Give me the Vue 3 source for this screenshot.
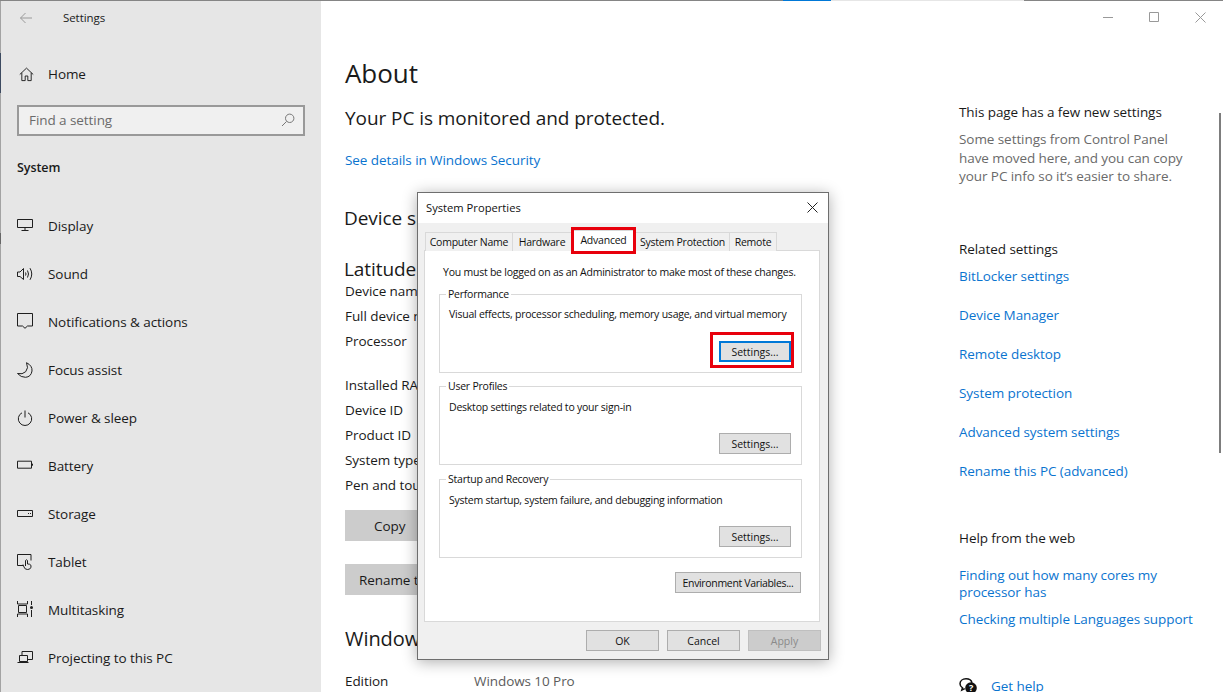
<template>
  <div class="page">
    <div class="topline">
      <span class="seg-blue"></span>
      <span class="seg-light"></span>
    </div>
    <div class="window">
      <aside class="side">
        <div class="edge"></div>
        <div class="side-head">
          <svg class="back" width="14" height="12" viewBox="0 0 14 12"><path d="M13 6H1.500M6.500 1 1.500 6l5 5" /></svg>
          <span>Settings</span>
        </div>
        <div class="home">
          <svg width="15" height="15" viewBox="0 0 16 16"><path d="M.8 8 8 1.200 15.200 8M3 6.200v8.300h3.600V9.600h2.800v4.900H13V6.200" /></svg>
          <span>Home</span>
        </div>
        <div class="search">
          <span>Find a setting</span>
          <svg width="14" height="14" viewBox="0 0 14 14"><circle cx="8.700" cy="5.300" r="4.200" /><path d="M5.600 8.400 1 13" /></svg>
        </div>
        <div class="side-title">System</div>
        <nav class="side-list">
          <div class="side-item">
            <svg width="16" height="16" viewBox="0 0 16 16"><path d="M.5 1.500h15v8H.5zM8 9.500v2.500M4.500 12.500h7" /></svg>
            <span>Display</span>
          </div>
          <div class="side-item">
            <svg width="16" height="16" viewBox="0 0 16 16"><path d="M.5 6v4.500h2.500l3.500 3V2.500L3 6zM8.500 6.500q1 1.500 0 3M10.500 4.500q2 3.500 0 7M13 2.200q3.500 5.800 0 11.600" /></svg>
            <span>Sound</span>
          </div>
          <div class="side-item">
            <svg width="16" height="16" viewBox="0 0 16 16"><path d="M.5 -.5h15v12.500h-5L8 14.300 5.500 12h-5z" /></svg>
            <span>Notifications &amp; actions</span>
          </div>
          <div class="side-item">
            <svg width="16" height="16" viewBox="0 0 16 16"><path d="M9.500 .7q6 3 5.500 8.300-1 6-6.500 6.300-4.500 .2-8-3.800 5 1.300 8.200-1.800 3.200-3.500 .8-9z" /></svg>
            <span>Focus assist</span>
          </div>
          <div class="side-item">
            <svg width="16" height="16" viewBox="0 0 16 16"><path d="M8 .5v7M5 2.800a6.700 6.700 0 1 0 6 0" /></svg>
            <span>Power &amp; sleep</span>
          </div>
          <div class="side-item">
            <svg width="16" height="16" viewBox="0 0 16 16"><path d="M.5 3.200h14v7H.5zM15.500 5.700v2" /></svg>
            <span>Battery</span>
          </div>
          <div class="side-item">
            <svg width="16" height="16" viewBox="0 0 16 16"><path d="M.5 4.500h15v6H.5zM11 7.500h1M13 7.500h1" /></svg>
            <span>Storage</span>
          </div>
          <div class="side-item">
            <svg width="16" height="16" viewBox="0 0 16 16"><path d="M6 11.500H.5v-11h13.500v6M8.500 12V6.500q1-1.500 2 0v3.500l2 .2q2 .5 1.500 3-.8 2.500-3.500 2.300-2.800 0-3.500-2.500L6 10.500" /></svg>
            <span>Tablet</span>
          </div>
          <div class="side-item">
            <svg width="16" height="16" viewBox="0 0 16 16"><path d="M.5 -1v3h10V-1M.5 15v-3h10v3M1.500 3.500h8v7h-8zM14.500 -1v4M14.500 8v7" /><circle class="dot" cx="14.500" cy="5.500" r="1.500" /></svg>
            <span>Multitasking</span>
          </div>
          <div class="side-item">
            <svg width="16" height="16" viewBox="0 0 16 16"><path d="M5 5V1.500h10.500v8H10.500M2.500 5.500h8v6h-8zM.5 12.500h11" /></svg>
            <span>Projecting to this PC</span>
          </div>
        </nav>
      </aside>

      <main class="main">
        <h1>About</h1>
        <h2 class="protected">Your PC is monitored and protected.</h2>
        <a class="link details">See details in Windows Security</a>
        <h2 class="device-spec">Device specifications</h2>
        <h2 class="model">Latitude</h2>
        <div class="spec-block">
          <div class="row" v-for="r in specsTop" :key="r">{{ r }}</div>
        </div>
        <div class="spec-block lower">
          <div class="row" v-for="r in specsBottom" :key="r">{{ r }}</div>
        </div>
        <div class="gray-btn copy">Copy</div>
        <div class="gray-btn rename">Rename this PC</div>
        <h2 class="win-spec">Windows specifications</h2>
        <div class="edition"><span>Edition</span><span class="val">Windows 10 Pro</span></div>
      </main>

      <aside class="right">
        <div class="dark">This page has a few new settings</div>
        <p class="note">Some settings from Control Panel have moved here, and you can copy your PC info so it’s easier to share.</p>
        <div class="dark related">Related settings</div>
        <div class="rel-links">
          <a class="link" v-for="l in related" :key="l">{{ l }}</a>
        </div>
        <div class="dark help">Help from the web</div>
        <a class="link multi">Finding out how many cores my processor has</a>
        <a class="link checking">Checking multiple Languages support</a>
        <div class="get-help">
          <svg width="18" height="16" viewBox="0 0 18 16">
            <path class="bub" d="M7 .8C3.500 .8 1 3 1 5.800c0 1.700 1 3.200 2.500 4L2.800 12l3-1.400" />
            <path class="bub" d="M7 .8c3.200 0 5.500 1.700 6 4" />
            <circle cx="12" cy="10" r="5.800" />
            <text x="12" y="13" text-anchor="middle" class="q">?</text>
          </svg>
          <a class="link">Get help</a>
        </div>
      </aside>

      <div class="winctl">
        <svg width="10" height="10" viewBox="0 0 10 10"><path d="M0 5.500h10" /></svg>
        <svg width="10" height="10" viewBox="0 0 10 10"><path d="M.5 .5h9v9h-9z" /></svg>
        <svg width="11" height="11" viewBox="0 0 11 11"><path d="M.5 .5l10 10M10.500 .5l-10 10" /></svg>
      </div>
      <div class="scrollbar"></div>

      <section class="dialog">
        <header class="dlg-title">
          <span>System Properties</span>
          <svg width="11" height="11" viewBox="0 0 11 11"><path d="M.5 .5l10 10M10.500 .5l-10 10" /></svg>
        </header>
        <div class="dlg-body">
          <div class="tabs">
            <div class="tab" v-for="t in tabs" :key="t" :class="{ active: t === 'Advanced' }">
              {{ t }}
              <i v-if="t === 'Advanced'" class="mark mark-tab"></i>
            </div>
          </div>
          <div class="panel">
            <div class="admin">You must be logged on as an Administrator to make most of these changes.</div>
            <fieldset class="group" v-for="(g, i) in groups" :key="g.title" :class="'g' + i">
              <legend>{{ g.title }}</legend>
              <div class="desc">{{ g.desc }}</div>
              <button class="btn settings" :class="{ focused: i === 0 }">
                Settings...
                <i v-if="i === 0" class="mark mark-btn"></i>
              </button>
            </fieldset>
            <button class="btn env">Environment Variables...</button>
          </div>
          <div class="dlg-foot">
            <button class="btn foot">OK</button>
            <button class="btn foot">Cancel</button>
            <button class="btn foot off">Apply</button>
          </div>
        </div>
      </section>
    </div>
  </div>
</template>

<script setup>
const specsTop = ['Device name', 'Full device name', 'Processor']
const specsBottom = ['Installed RAM', 'Device ID', 'Product ID', 'System type', 'Pen and touch']
const related = [
  'BitLocker settings',
  'Device Manager',
  'Remote desktop',
  'System protection',
  'Advanced system settings',
  'Rename this PC (advanced)',
]
const tabs = ['Computer Name', 'Hardware', 'Advanced', 'System Protection', 'Remote']
const groups = [
  { title: 'Performance', desc: 'Visual effects, processor scheduling, memory usage, and virtual memory' },
  { title: 'User Profiles', desc: 'Desktop settings related to your sign-in' },
  { title: 'Startup and Recovery', desc: 'System startup, system failure, and debugging information' },
]
</script>

<style>
html, body { margin: 0; background: #fff; overflow: hidden; }
</style>

<style scoped>
.page {
  width: 1223px;
  height: 692px;
  overflow: hidden;
  font-family: "Open Sans", "Noto Sans", sans-serif;
  font-size: 13.5px;
  letter-spacing: -0.07px;
  color: #1a1a1a;
  background: #fff;
}
.topline {
  height: 1px;
  background: #858585;
  display: flex;
  padding-left: 783px;
}
.seg-blue { width: 48px; background: #0078d7; }
.seg-light { width: 193px; background: #e6e6e6; }

.window { position: relative; display: flex; height: 691px; }

.side {
  position: relative;
  width: 321px;
  flex: none;
  box-sizing: border-box;
  background: #e6e6e6;
  padding-left: 17px;
}
.edge {
  position: absolute;
  left: 0;
  top: 0;
  bottom: 0;
  width: 1px;
  background: linear-gradient(#a3a3a3 0 52px, #3c4a60 52px 92px, #a3a3a3 92px 232px, #666 232px 243px, #a3a3a3 243px);
}
.side svg { overflow: visible; }
.side svg path, .side svg circle { fill: none; stroke: #1f1f1f; stroke-width: 1; }
.side svg .dot { fill: #1f1f1f; stroke: none; }
.side-head {
  height: 33px;
  display: flex;
  align-items: center;
  font-size: 11.5px;
}
.side-head .back { margin: 0 30px 0 2px; }
.side-head .back path { stroke: #9a9a9a; }
.home {
  height: 46px;
  margin-top: 17px;
  display: flex;
  align-items: center;
  gap: 14px;
  padding-left: 2px;
}
.search {
  width: 288px;
  height: 31px;
  margin-top: 8px;
  box-sizing: border-box;
  border: 2px solid #999;
  background: #f0f0f0;
  display: flex;
  align-items: center;
  justify-content: space-between;
  padding: 0 8px 2px 10px;
  color: #6b6b6b;
}
.search svg path, .search svg circle { stroke: #777; }
.side-title { margin-top: 22px; line-height: 20px; font-weight: 600; font-size: 12.5px; }
.side-list { margin-top: 24px; }
.side-item {
  height: 48px;
  display: flex;
  align-items: center;
  gap: 15px;
}

.main { width: 638px; flex: none; padding-left: 24px; box-sizing: border-box; }
.main h1 { margin: 52px 0 0; font-weight: 400; font-size: 26px; line-height: 40px; }
.main h2 { margin: 0; font-weight: 400; font-size: 19px; line-height: 28px; }
.link { display: block; color: #0a74cf; }
.main .protected { margin-top: 11px; }
.details { margin-top: 18px; line-height: 20px; }
.main .device-spec { margin: 34px 0 0 -1px; }
.main .model { margin: 27px 0 0 -1px; line-height: 20px; }
.row { line-height: 25px; }
.lower { margin-top: 19px; }
.gray-btn {
  background: #ccc;
  width: 300px;
  height: 31px;
  line-height: 33px;
  box-sizing: border-box;
}
.copy { margin-top: 12px; padding-left: 29px; }
.rename { margin-top: 23px; padding-left: 14px; }
.main .win-spec { margin-top: 30px; font-size: 20px; }
.edition { margin-top: 18px; line-height: 20px; display: grid; grid-template-columns: 129px 1fr; }
.val { color: #5c5c5c; }

.right { width: 240px; flex: none; padding-top: 101px; box-sizing: border-box; }
.dark { line-height: 20px; }
.note { margin: 8px 0 0; line-height: 18.500px; color: #6a6a6a; }
.related { margin-top: 53px; }
.rel-links { margin-top: 7px; display: flex; flex-direction: column; gap: 19px; line-height: 20px; }
.help { margin-top: 47px; }
.multi { margin-top: 19px; line-height: 17px; }
.checking { margin-top: 8px; line-height: 20px; white-space: nowrap; }
.get-help { margin-top: 47px; display: flex; align-items: center; gap: 14px; line-height: 20px; }
.get-help circle { fill: #111; }
.get-help .bub { fill: none; stroke: #111; stroke-width: 1.500; }
.get-help .q { fill: #fff; font-size: 9px; font-weight: 700; }

.winctl {
  position: absolute;
  top: 11px;
  left: 1103px;
  display: flex;
  gap: 36px;
}
.winctl path { fill: none; stroke: #999; stroke-width: 1; }
.scrollbar {
  position: absolute;
  left: 1219px;
  top: 112px;
  width: 2px;
  height: 340px;
  background: #7d7d7d;
}

.dialog {
  position: absolute;
  left: 417px;
  top: 191px;
  width: 412px;
  height: 468px;
  box-sizing: border-box;
  border: 1px solid #6e6e6e;
  background: #f0f0f0;
  box-shadow: 0 2px 14px rgba(0, 0, 0, 0.32);
  font-size: 10.5px;
  letter-spacing: -0.23px;
  color: #111;
}
.dlg-title {
  height: 30px;
  background: #fff;
  display: flex;
  align-items: center;
  justify-content: space-between;
  padding: 0 10px 2px 8px;
  box-sizing: border-box;
  font-size: 11.2px;
  letter-spacing: 0;
}
.dlg-title path { fill: none; stroke: #222; stroke-width: 1; }
.dlg-body { padding: 9px 0 0 6px; }
.tabs {
  display: grid;
  grid-template-columns: 87px 59px 64px 94px 47px;
  height: 18px;
  margin-left: 2px;
  position: relative;
  z-index: 1;
}
.tab {
  position: relative;
  box-sizing: border-box;
  border: 1px solid #d9d9d9;
  border-bottom: 0;
  background: #f0f0f0;
  text-align: center;
  line-height: 18px;
  margin-left: -1px;
  white-space: nowrap;
}
.tab.active {
  background: #fff;
  height: 21px;
  margin-top: -2px;
  line-height: 18px;
  z-index: 1;
}
.mark { position: absolute; border: 3px solid #e8000c; box-sizing: border-box; pointer-events: none; }
.mark-tab { left: -1px; right: -1px; top: -4px; bottom: -3px; }
.mark-btn { left: -11px; right: -5px; top: -11px; bottom: -8px; }
.panel {
  width: 396px;
  height: 372px;
  box-sizing: border-box;
  background: #fff;
  border: 1px solid #d9d9d9;
  padding: 0 17px 0 14px;
}
.admin { margin: 13px 0 0 4px; line-height: 16px; white-space: nowrap; }
.group {
  margin: 5px 0 0;
  padding: 0 10px 10px 9px;
  height: 87px;
  box-sizing: border-box;
  border: 1px solid #d9d9d9;
  display: flex;
  flex-direction: column;
  min-width: 0;
}
.g0 { margin-top: 6px; }
.g2 { margin-top: 6px; }
.group legend { margin-left: -3px; padding: 0 2px; line-height: 16px; }
.desc { margin-top: 5px; line-height: 16px; white-space: nowrap; }
.g0 .desc { margin-top: 4px; }
.btn {
  position: relative;
  height: 21px;
  padding: 0;
  box-sizing: border-box;
  border: 1px solid #adadad;
  background: #e1e1e1;
  font: inherit;
  color: #111;
  border-radius: 0;
  white-space: nowrap;
}
.settings { width: 72px; margin-top: auto; align-self: flex-end; }
.focused { border: 2px solid #0078d7; }
.env { display: block; width: 126px; margin: 14px 0 0 auto; transform: translateX(-1px); letter-spacing: -0.33px; }
.dlg-foot { display: flex; justify-content: flex-end; gap: 8px; margin: 8px 7px 0 0; }
.foot { width: 73px; }
.off { background: #ccc; border-color: #bfbfbf; color: #8a8a8a; }
</style>
